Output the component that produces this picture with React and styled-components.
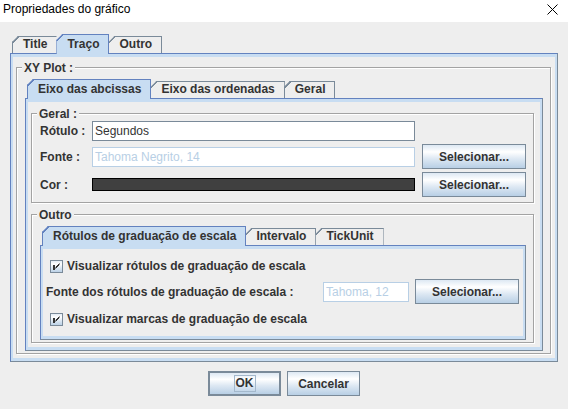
import React, { useId } from 'react';
import styled, { createGlobalStyle } from 'styled-components';

const GlobalStyle = createGlobalStyle`
  html, body { margin: 0; padding: 0; background: #eeeeee; }
  body {
    font-family: "Liberation Sans", Arial, sans-serif;
    font-size: 12px;
    color: #333333;
  }
  * { box-sizing: border-box; }
`;

const Window = styled.div`
  width: 568px;
  height: 409px;
  background: #eeeeee;
  display: flex;
  flex-direction: column;
  overflow: hidden;
`;

const TitleBar = styled.div`
  flex: none;
  height: 22px;
  background: #ffffff;
  display: flex;
  justify-content: space-between;
  align-items: flex-start;
  padding: 0 10px 0 3px;
`;

const TitleText = styled.span`
  font-size: 12px;
  line-height: 19px;
  color: #000000;
`;

const CloseSvg = styled.svg`
  margin-top: 4px;
  display: block;
`;

const Body = styled.div`
  flex: 1;
  display: flex;
  flex-direction: column;
  padding: 12px 10px 0;
`;

const Pane = styled.div`
  display: flex;
  flex-direction: column;
`;

const TabRow = styled.div`
  position: relative;
  z-index: 1;
  display: flex;
  align-items: flex-end;
  height: 19px;
  padding-left: 2px;
`;

const tabBorder = (p) => (p.$selected ? '#6382bf' : '#7a8a99');

const Tab = styled.div`
  position: relative;
  z-index: ${(p) => (p.$selected ? 3 : 1)};
  flex: none;
  height: ${(p) => (p.$selected ? 20 : 17)}px;
  margin-right: -1px;
  margin-bottom: ${(p) => (p.$selected ? -1 : 0)}px;
  padding: ${(p) => (p.$selected ? 2 : 0)}px 9px 0 10px;
  border: 1px solid ${tabBorder};
  border-bottom: none;
  border-right-color: ${(p) => (p.$beforeSelected ? 'transparent' : tabBorder(p))};
  background: ${(p) => (p.$selected ? '#c8ddf2' : '#eeeeee')};
  clip-path: polygon(6px 0, 100% 0, 100% 100%, 0 100%, 0 6px);
  font-weight: bold;
  line-height: 15px;
  color: #333333;
  white-space: nowrap;

  &::before {
    content: '';
    position: absolute;
    top: -1px;
    left: -1px;
    width: 7px;
    height: 7px;
    background: linear-gradient(
      to bottom right,
      transparent calc(50% - 0.75px),
      ${tabBorder} calc(50% - 0.75px),
      ${tabBorder} calc(50% + 0.75px),
      transparent calc(50% + 0.75px)
    );
  }
`;

const TabPanel = styled.div`
  border: 1px solid;
  border-color: #6382bf #7a8a99 #7a8a99 #6382bf;
  background: #eeeeee;
  box-shadow: inset 2px 3px 0 #c8ddf2, inset -2px -3px 0 #c8ddf2;
`;

const OuterPanel = styled(TabPanel)`
  padding: 13px 6px 7px 5px;
`;

const AxisPanel = styled(TabPanel)`
  display: flex;
  flex-direction: column;
  gap: 11px;
  padding: 14px 8px 7px 5px;
`;

const TickPanel = styled(TabPanel)`
  display: flex;
  flex-direction: column;
  padding: 10px 5px 10px 5px;
`;

const Group = styled.div`
  position: relative;
  border: 1px solid #a3a3a3;
  box-shadow: inset 1px 1px 0 #ffffff, 1px 1px 0 #ffffff;
`;

const PaneGroup = styled(Group)`
  padding: 11px 7px 2px 8px;
`;

const FormGroup = styled(Group)`
  display: grid;
  grid-template-columns: 45px 323px 104px;
  grid-template-rows: 20px 25px 25px;
  column-gap: 7px;
  row-gap: 3px;
  align-items: center;
  padding: 7px 6px 5px 8px;
`;

const GroupTitle = styled.span`
  position: absolute;
  top: -7px;
  left: 5px;
  padding: 0 2px;
  background: #eeeeee;
  font-weight: bold;
  line-height: 14px;
  color: #333333;
  white-space: nowrap;
`;

const Label = styled.span`
  font-weight: bold;
  color: #333333;
  white-space: nowrap;
`;

const TextField = styled.div`
  height: 20px;
  border: 1px solid ${(p) => (p.$disabled ? '#b8cfe5' : '#7a8a99')};
  background: #ffffff;
  color: ${(p) => (p.$disabled ? '#b8cfe5' : '#333333')};
  padding: 0 2px;
  display: flex;
  align-items: center;
  white-space: nowrap;
  overflow: hidden;
`;

const ColorBar = styled.div`
  height: 13px;
  border: 1px solid #000000;
  background: ${(p) => p.$color};
`;

const Button = styled.button`
  width: ${(p) => p.$w}px;
  height: 25px;
  padding: 0;
  border: ${(p) => (p.$default ? 2 : 1)}px solid #7a8a99;
  background: linear-gradient(#dde8f3 0%, #ffffff 30%, #dde8f3 60%, #b8cfe5 100%);
  font-family: "Liberation Sans", Arial, sans-serif;
  font-size: 12px;
  font-weight: bold;
  color: #333333;
  display: flex;
  align-items: center;
  justify-content: center;
  cursor: default;
`;

const FocusText = styled.span`
  border: 1px solid #a3b8cc;
  padding: 0 1px;
  line-height: 15px;
`;

const CheckRow = styled.div`
  height: 20px;
  display: flex;
  align-items: center;
  gap: 4px;
  padding-left: 4px;
  margin-top: ${(p) => p.$mt || 0}px;
`;

const FontRow = styled.div`
  height: 25px;
  display: grid;
  grid-template-columns: 271px 86px 104px;
  column-gap: 6px;
  align-items: center;
  margin-top: ${(p) => p.$mt || 0}px;
`;

const ButtonBar = styled.div`
  display: flex;
  justify-content: center;
  gap: 6px;
  margin-top: 9px;
`;

function CloseIcon() {
  return (
    <CloseSvg width="11" height="11" viewBox="0 0 11 11">
      <path d="M0.5 0.5 L10.5 10.5 M10.5 0.5 L0.5 10.5" stroke="#000" strokeWidth="1" fill="none" />
    </CloseSvg>
  );
}

function CheckIcon() {
  const id = useId().replace(/:/g, '');
  return (
    <svg width="13" height="13" viewBox="0 0 13 13" style={{ display: 'block', flex: 'none' }}>
      <defs>
        <linearGradient id={id} x1="0" y1="0" x2="0" y2="1">
          <stop offset="0" stopColor="#dde8f3" />
          <stop offset="0.3" stopColor="#ffffff" />
          <stop offset="0.6" stopColor="#dde8f3" />
          <stop offset="1" stopColor="#b8cfe5" />
        </linearGradient>
      </defs>
      <rect x="0.5" y="0.5" width="12" height="12" fill={`url(#${id})`} stroke="#7a8a99" shapeRendering="crispEdges" />
      <rect x="3" y="5" width="2" height="5" fill="#333333" shapeRendering="crispEdges" />
      <path d="M9.5 3.5 L5.5 7.5 M9.5 4.5 L5.5 8.5" stroke="#333333" strokeWidth="1" fill="none" />
    </svg>
  );
}

function TabbedPane({ labels, selected, children }) {
  return (
    <Pane>
      <TabRow>
        {labels.map((l, i) => (
          <Tab key={l} $selected={i === selected} $beforeSelected={i === selected - 1}>
            {l}
          </Tab>
        ))}
      </TabRow>
      {children}
    </Pane>
  );
}

function CheckBox({ label, mt }) {
  return (
    <CheckRow $mt={mt}>
      <CheckIcon />
      <Label>{label}</Label>
    </CheckRow>
  );
}

export default function App() {
  return (
    <>
      <GlobalStyle />
      <Window>
        <TitleBar>
          <TitleText>Propriedades do gráfico</TitleText>
          <CloseIcon />
        </TitleBar>
        <Body>
          <TabbedPane labels={['Title', 'Traço', 'Outro']} selected={1}>
            <OuterPanel>
              <PaneGroup>
                <GroupTitle>XY Plot :</GroupTitle>
                <TabbedPane labels={['Eixo das abcissas', 'Eixo das ordenadas', 'Geral']} selected={0}>
                  <AxisPanel>
                    <FormGroup>
                      <GroupTitle>Geral :</GroupTitle>
                      <Label>Rótulo :</Label>
                      <TextField>Segundos</TextField>
                      <span />
                      <Label>Fonte :</Label>
                      <TextField $disabled>Tahoma Negrito, 14</TextField>
                      <Button $w={104}>Selecionar...</Button>
                      <Label>Cor :</Label>
                      <ColorBar $color="#404040" />
                      <Button $w={104}>Selecionar...</Button>
                    </FormGroup>
                    <PaneGroup>
                      <GroupTitle>Outro</GroupTitle>
                      <TabbedPane labels={['Rótulos de graduação de escala', 'Intervalo', 'TickUnit']} selected={0}>
                        <TickPanel>
                          <CheckBox label="Visualizar rótulos de graduação de escala" />
                          <FontRow $mt={3}>
                            <Label>Fonte dos rótulos de graduação de escala :</Label>
                            <TextField $disabled>Tahoma, 12</TextField>
                            <Button $w={104}>Selecionar...</Button>
                          </FontRow>
                          <CheckBox label="Visualizar marcas de graduação de escala" mt={5} />
                        </TickPanel>
                      </TabbedPane>
                    </PaneGroup>
                  </AxisPanel>
                </TabbedPane>
              </PaneGroup>
            </OuterPanel>
          </TabbedPane>
          <ButtonBar>
            <Button $w={73} $default>
              <FocusText>OK</FocusText>
            </Button>
            <Button $w={73}>Cancelar</Button>
          </ButtonBar>
        </Body>
      </Window>
    </>
  );
}
